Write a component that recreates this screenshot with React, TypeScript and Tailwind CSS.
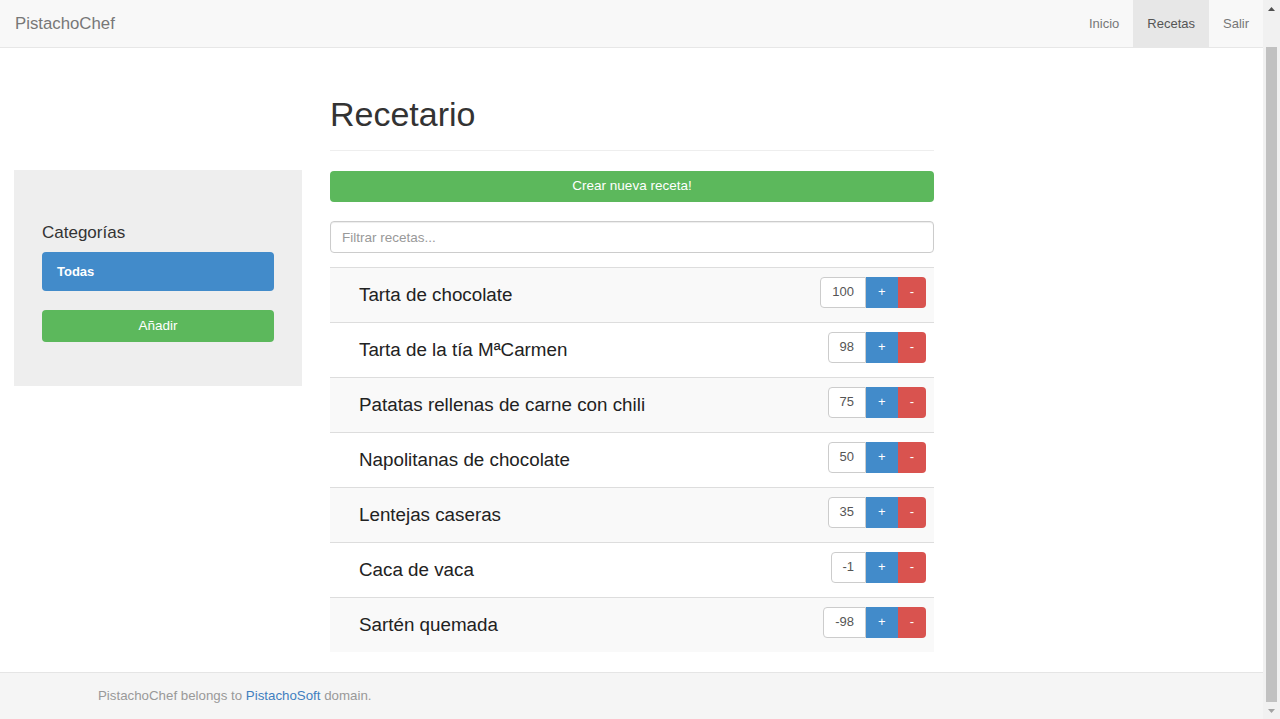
import { useState } from 'react';

const RECETAS = [
  { id: 1, name: 'Tarta de chocolate', votes: 100 },
  { id: 2, name: 'Tarta de la tía MªCarmen', votes: 98 },
  { id: 3, name: 'Patatas rellenas de carne con chili', votes: 75 },
  { id: 4, name: 'Napolitanas de chocolate', votes: 50 },
  { id: 5, name: 'Lentejas caseras', votes: 35 },
  { id: 6, name: 'Caca de vaca', votes: -1 },
  { id: 7, name: 'Sartén quemada', votes: -98 },
];

function Scrollbar() {
  return (
    <div className="flex w-[17px] shrink-0 flex-col bg-[#f1f1f1]">
      <div className="flex h-[17px] items-center justify-center">
        <svg width="7" height="4" viewBox="0 0 7 4">
          <path d="M3.5 0 L7 4 L0 4 Z" fill="#505050" />
        </svg>
      </div>
      <div className="flex flex-1 flex-col px-[3px] pt-[30px]">
        <div className="flex-1 bg-[#c1c1c1]" />
      </div>
      <div className="flex h-[17px] items-center justify-center">
        <svg width="7" height="4" viewBox="0 0 7 4">
          <path d="M0 0 L7 0 L3.5 4 Z" fill="#a3a3a3" />
        </svg>
      </div>
    </div>
  );
}

export default function App() {
  const [filter, setFilter] = useState('');
  const [recetas, setRecetas] = useState(RECETAS);

  const vote = (id: number, delta: number) =>
    setRecetas(rs => rs.map(r => (r.id === id ? { ...r, votes: r.votes + delta } : r)));

  const shown = recetas.filter(r => r.name.toLowerCase().includes(filter.toLowerCase()));

  return (
    <div className="flex h-[719px] overflow-hidden bg-white font-['Liberation_Sans',Arial,sans-serif] text-[#333]">
      <div className="flex min-w-0 flex-1 flex-col">
        <nav className="flex h-[48px] shrink-0 items-stretch justify-between border-b border-[#e7e7e7] bg-[#f8f8f8]">
          <a className="flex items-center pl-[15px] text-[16.8px] text-[#777]">PistachoChef</a>
          <ul className="flex items-stretch text-[13px] text-[#777]">
            <li className="flex items-center px-[14px]">Inicio</li>
            <li className="flex items-center bg-[#e7e7e7] px-[14px] text-[#555]">Recetas</li>
            <li className="flex items-center px-[14px]">Salir</li>
          </ul>
        </nav>

        <div className="flex flex-1 items-start">
          <aside className="ml-[14px] mt-[122px] flex h-[216px] w-[288px] shrink-0 flex-col bg-[#eee] px-[28px] pt-[53px]">
            <h4 className="text-[17px] leading-[19px] text-[#333]">Categorías</h4>
            <button className="mt-[10px] flex h-[39px] items-center rounded-[4px] bg-[#428bca] pl-[15px] text-[13px] font-bold text-white">
              Todas
            </button>
            <button className="mt-[19px] flex h-[32px] items-center justify-center rounded-[4px] bg-[#5cb85c] text-[13.5px] text-white">
              Añadir
            </button>
          </aside>

          <main className="ml-[28px] mt-[48px] flex w-[604px] shrink-0 flex-col">
            <h1 className="border-b border-[#eee] pb-[17px] text-[34px] leading-[37px] text-[#333]">Recetario</h1>
            <button className="mt-[20px] flex h-[31px] items-center justify-center rounded-[4px] bg-[#5cb85c] text-[13.5px] text-white">
              Crear nueva receta!
            </button>
            <input
              value={filter}
              onChange={e => setFilter(e.target.value)}
              placeholder="Filtrar recetas..."
              className="mt-[19px] h-[32px] rounded-[4px] border border-[#ccc] px-[11px] text-[13.5px] text-[#555] shadow-[inset_0_1px_1px_rgba(0,0,0,0.075)] outline-none placeholder:text-[#999]"
            />
            <div className="mt-[14px] flex flex-col">
              {shown.map((r, i) => (
                <div
                  key={r.id}
                  className={`flex h-[55px] items-center justify-between border-t border-[#ddd] pl-[29px] pr-[8px] ${i % 2 === 0 ? 'bg-[#f9f9f9]' : 'bg-white'}`}
                >
                  <span className="text-[18.8px] text-[#222]">{r.name}</span>
                  <div className="mb-[6px] flex h-[31px] items-stretch text-[13px]">
                    <span className="flex items-center rounded-l-[4px] border border-[#ccc] bg-white px-[11px] text-[#555]">
                      {r.votes}
                    </span>
                    <button
                      onClick={() => vote(r.id, 1)}
                      className="flex items-center bg-[#428bca] px-[12px] text-white"
                    >
                      +
                    </button>
                    <button
                      onClick={() => vote(r.id, -1)}
                      className="flex items-center rounded-r-[4px] bg-[#d9534f] px-[12px] text-white"
                    >
                      -
                    </button>
                  </div>
                </div>
              ))}
            </div>
          </main>
        </div>

        <footer className="flex h-[47px] shrink-0 items-center border-t border-[#e5e5e5] bg-[#f5f5f5] pl-[98px] text-[13.3px] text-[#999]">
          <p>
            PistachoChef belongs to <a className="text-[#3f7fc0]">PistachoSoft</a> domain.
          </p>
        </footer>
      </div>
      <Scrollbar />
    </div>
  );
}
